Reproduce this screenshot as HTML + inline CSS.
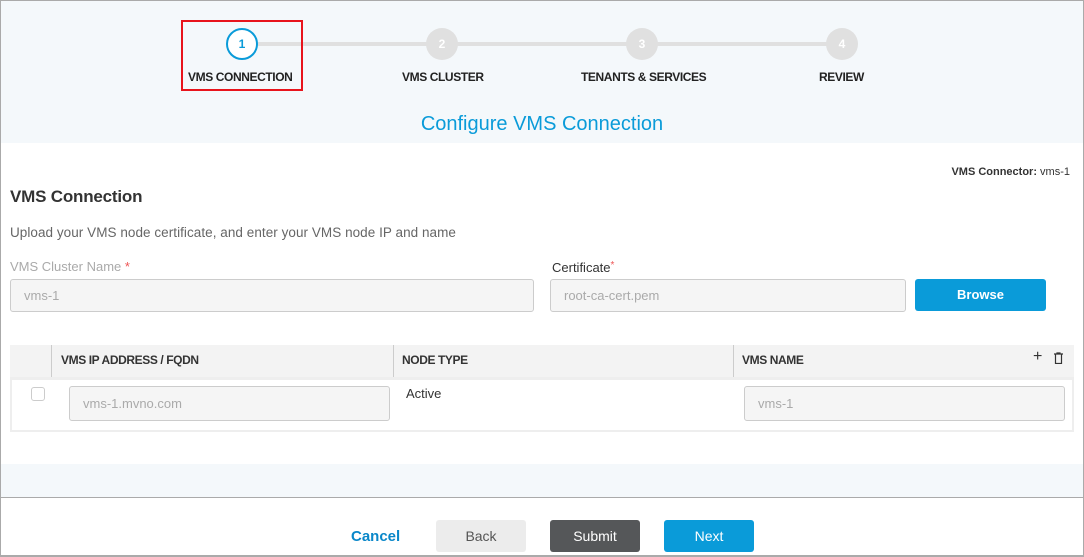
<!DOCTYPE html>
<html><head><style>
*{box-sizing:border-box;margin:0;padding:0}
body{width:1084px;height:557px;overflow:hidden;font-family:"Liberation Sans",sans-serif;background:#fff;position:relative;color:#333}
.frame{position:absolute;left:0;top:0;width:1084px;height:557px;border:1px solid #aaa;border-bottom:2px solid #aaa}
.a{position:absolute}
.top{left:1px;top:1px;width:1082px;height:142px;background:#f4f8fb}
.line{top:42px;height:4px;background:#e0e0e0}
.c{width:32px;height:32px;border-radius:50%;background:#e0e0e0;color:#fff;font-size:12px;font-weight:bold;text-align:center;line-height:32px;top:28px}
.lbl{font-size:12px;font-weight:bold;color:#222;top:70px;letter-spacing:-0.4px}
.inp{border:1px solid #ccc;border-radius:3px;background:#f5f5f5;color:#aaa;font-size:13px;padding-left:13px;display:flex;align-items:center}
.th{font-size:12px;font-weight:bold;color:#333;top:353px;letter-spacing:-0.4px}
.btn{top:520px;height:32px;width:90px;border-radius:3px;font-size:14px;text-align:center;line-height:32px}
</style></head><body>
<div class="a top"></div>
<div class="a line" style="left:242px;width:600px"></div>
<div class="a c" style="left:226px;background:#fff;border:2px solid #0a9bd9;color:#0a9bd9;line-height:28px">1</div>
<div class="a c" style="left:426px">2</div>
<div class="a c" style="left:626px">3</div>
<div class="a c" style="left:826px">4</div>
<div class="a lbl" style="left:188px">VMS CONNECTION</div>
<div class="a lbl" style="left:402px">VMS CLUSTER</div>
<div class="a lbl" style="left:581px">TENANTS &amp; SERVICES</div>
<div class="a lbl" style="left:819px">REVIEW</div>
<div class="a" style="left:181px;top:20px;width:122px;height:71px;border:2px solid #e8141c"></div>
<div class="a" style="left:0;width:1084px;text-align:center;top:113px;font-size:20px;color:#0a9bd9">Configure VMS Connection</div>
<div class="a" style="right:14px;top:166px;font-size:11px"><b>VMS Connector:</b> vms-1</div>
<div class="a" style="left:10px;top:187px;font-size:17px;font-weight:bold;color:#333;letter-spacing:-0.2px">VMS Connection</div>
<div class="a" style="left:10px;top:225px;font-size:13.5px;color:#666;letter-spacing:0.05px">Upload your VMS node certificate, and enter your VMS node IP and name</div>
<div class="a" style="left:10px;top:259px;font-size:13px;color:#aaa">VMS Cluster Name <span style="color:#e55">*</span></div>
<div class="a" style="left:552px;top:260px;font-size:13px;color:#333">Certificate<span style="color:#e55;font-size:10px;vertical-align:top">*</span></div>
<div class="a inp" style="left:10px;top:279px;width:524px;height:33px">vms-1</div>
<div class="a inp" style="left:550px;top:279px;width:356px;height:33px">root-ca-cert.pem</div>
<div class="a" style="left:915px;top:279px;width:131px;height:32px;background:#0a9bd9;border-radius:3px;color:#fff;font-weight:bold;font-size:13px;text-align:center;line-height:32px">Browse</div>
<div class="a" style="left:10px;top:345px;width:1064px;height:32px;background:#f3f3f3"></div>
<div class="a" style="left:51px;top:345px;width:1px;height:32px;background:#ccc"></div>
<div class="a" style="left:393px;top:345px;width:1px;height:32px;background:#ccc"></div>
<div class="a" style="left:733px;top:345px;width:1px;height:32px;background:#ccc"></div>
<div class="a th" style="left:61px">VMS IP ADDRESS / FQDN</div>
<div class="a th" style="left:402px">NODE TYPE</div>
<div class="a th" style="left:742px">VMS NAME</div>
<div class="a" style="left:1033px;top:348px;font-size:16px;color:#333">+</div>
<svg class="a" style="left:1053px;top:352px" width="11" height="12" viewBox="0 0 11 12"><path d="M1 2h9M4 2V1h3v1M2.5 2.5v9h6v-9" fill="none" stroke="#333" stroke-width="1.2"/></svg>
<div class="a" style="left:10px;top:377px;width:1064px;height:55px;border:2px solid #eee;border-top:3px solid #eee"></div>
<div class="a" style="left:31px;top:387px;width:14px;height:14px;border:1px solid #ccc;border-radius:3px"></div>
<div class="a inp" style="left:69px;top:386px;width:321px;height:35px">vms-1.mvno.com</div>
<div class="a" style="left:406px;top:386px;font-size:13px">Active</div>
<div class="a inp" style="left:744px;top:386px;width:321px;height:35px">vms-1</div>
<div class="a" style="left:1px;top:464px;width:1082px;height:33px;background:#f4f8fb"></div>
<div class="a" style="left:1px;top:497px;width:1082px;height:1px;background:#aaa"></div>
<div class="a" style="left:351px;top:528px;font-size:15px;font-weight:bold;color:#0a87c9">Cancel</div>
<div class="a btn" style="left:436px;background:#ececec;color:#555">Back</div>
<div class="a btn" style="left:550px;background:#555759;color:#fff">Submit</div>
<div class="a btn" style="left:664px;background:#0a9bd9;color:#fff">Next</div>
<div class="frame a"></div>
</body></html>
